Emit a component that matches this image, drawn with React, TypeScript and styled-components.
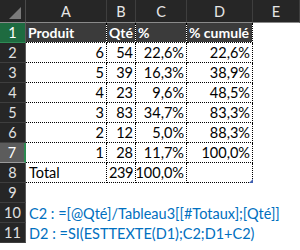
import React from "react";
import styled, { createGlobalStyle, css } from "styled-components";

const GlobalStyle = createGlobalStyle`
  html, body { margin: 0; padding: 0; background: #ffffff; }
  body { font-family: "Lato", "Liberation Sans", sans-serif; }
`;

const Sheet = styled.div`
  display: grid;
  grid-template-columns: 26px 81px 29px 51px 66px 1fr;
  grid-template-rows: 23px repeat(11, 20px);
  width: 300px;
  height: 250px;
  overflow: hidden;
  background: #ffffff;
  font-family: "Lato", "Liberation Sans", sans-serif;
  font-size: 14.5px;
  line-height: 18px;
`;

const Corner = styled.div`
  background: #262626;
  border-right: 1px solid #4a4a4a;
  border-bottom: 1px solid #8a8a8a;
  box-sizing: border-box;
  display: flex;
  align-items: flex-end;
  justify-content: flex-end;
  padding: 0 4px 3px 0;
`;

const ColHeader = styled.div`
  background: #262626;
  color: #e6e6e6;
  border-right: 1px solid #3e3e3e;
  border-bottom: 1px solid #8a8a8a;
  box-sizing: border-box;
  display: flex;
  align-items: center;
  justify-content: center;
  padding-top: 1px;
`;

type RowState = "normal" | "selected" | "active";

const RowHeader = styled.div<{ $state: RowState }>`
  background: #262626;
  color: #e0e0e0;
  border-right: 1px solid #5a5a5a;
  border-bottom: 1px solid #3e3e3e;
  box-sizing: border-box;
  display: flex;
  align-items: center;
  justify-content: center;
  padding-top: 1px;
  ${(p) =>
    p.$state === "selected" &&
    css`
      background: #1e6b40;
      color: #ffffff;
      border-bottom-color: #2f8a55;
    `}
  ${(p) =>
    p.$state === "active" &&
    css`
      background: #5c5c5c;
      color: #ffffff;
      border-right: 2px solid #2a8a50;
      border-bottom-color: #9a9a9a;
    `}
`;

const Cell = styled.div<{
  $align?: "left" | "right";
  $head?: boolean;
  $table?: boolean;
  $span?: number;
  $blue?: boolean;
  $tight?: boolean;
}>`
  position: relative;
  box-sizing: border-box;
  display: flex;
  align-items: flex-end;
  justify-content: ${(p) => (p.$align === "right" ? "flex-end" : "flex-start")};
  padding: 0 2px 0 3px;
  white-space: nowrap;
  overflow: visible;
  color: ${(p) => (p.$blue ? "#0070c0" : "#000000")};
  background: #ffffff;
  background-clip: padding-box;
  ${(p) => p.$span && css`grid-column: span ${p.$span};`}
  ${(p) => p.$tight && css`letter-spacing: -0.4px; padding-left: 1px;`}
  ${(p) =>
    p.$table &&
    css`
      border-right: 1px dotted #000000;
      border-bottom: 1px dotted #000000;
    `}
  ${(p) =>
    p.$head &&
    css`
      background: #3b3b3b;
      background-clip: padding-box;
      color: #ffffff;
      font-weight: 700;
      font-size: 14px;
      padding-left: 2px;
    `}
`;

const Handle = styled.span`
  position: absolute;
  right: -1px;
  bottom: -1px;
  width: 0;
  height: 0;
  border-left: 4px solid transparent;
  border-bottom: 4px solid #3f5fb0;
`;

const rows: [number, number, string, string][] = [
  [6, 54, "22,6%", "22,6%"],
  [5, 39, "16,3%", "38,9%"],
  [4, 23, "9,6%", "48,5%"],
  [3, 83, "34,7%", "83,3%"],
  [2, 12, "5,0%", "88,3%"],
  [1, 28, "11,7%", "100,0%"],
];

export default function App() {
  return (
    <>
      <GlobalStyle />
      <Sheet>
        <Corner>
          <svg width="12" height="12" viewBox="0 0 12 12">
            <polygon points="12,0 12,12 0,12" fill="#7a7a7a" />
          </svg>
        </Corner>
        {["A", "B", "C", "D", "E"].map((c) => (
          <ColHeader key={c}>{c}</ColHeader>
        ))}

        <RowHeader $state="selected">1</RowHeader>
        <Cell $table $head>Produit</Cell>
        <Cell $table $head>Qté</Cell>
        <Cell $table $head>%</Cell>
        <Cell $table $head>% cumulé</Cell>
        <Cell />

        {rows.map((r, i) => (
          <React.Fragment key={i}>
            <RowHeader $state={i === 5 ? "active" : "normal"}>{i + 2}</RowHeader>
            <Cell $table $align="right">{r[0]}</Cell>
            <Cell $table $align="right">{r[1]}</Cell>
            <Cell $table $align="right">{r[2]}</Cell>
            <Cell $table $align="right">{r[3]}</Cell>
            <Cell />
          </React.Fragment>
        ))}

        <RowHeader $state="normal">8</RowHeader>
        <Cell $table>Total</Cell>
        <Cell $table $tight $align="right">239</Cell>
        <Cell $table $align="right">100,0%</Cell>
        <Cell $table>
          <Handle />
        </Cell>
        <Cell />

        <RowHeader $state="normal">9</RowHeader>
        <Cell $span={5} />

        <RowHeader $state="normal">10</RowHeader>
        <Cell $span={5} $blue>C2 : =[@Qté]/Tableau3[[#Totaux];[Qté]]</Cell>

        <RowHeader $state="normal">11</RowHeader>
        <Cell $span={5} $blue>D2 : =SI(ESTTEXTE(D1);C2;D1+C2)</Cell>
      </Sheet>
    </>
  );
}
